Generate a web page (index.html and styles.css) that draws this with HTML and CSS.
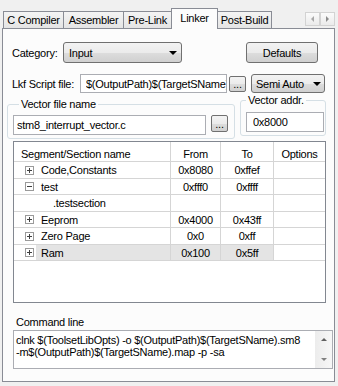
FILE: index.html
```html
<!DOCTYPE html>
<html lang="en">
<head>
  <meta charset="UTF-8" />
  <title>Linker Settings</title>
  <link rel="stylesheet" href="styles.css">
</head>
<body>

  <div class="abas">
    <div class="aba aba-cc">C Compiler</div>
    <div class="aba aba-asm">Assembler</div>
    <div class="aba aba-pre">Pre-Link</div>
    <div class="aba aba-ativa">Linker</div>
    <div class="aba aba-pos">Post-Build</div>
    <div class="aba-setas">
      <span class="seta seta-esq"></span>
      <span class="seta seta-dir"></span>
    </div>
  </div>

  <div class="painel">
    <div class="linha linha-cat">
      <label class="rotulo rotulo-cat">Category:</label>
      <div class="combo combo-cat">Input</div>
      <button class="botao btn-padrao">Defaults</button>
    </div>

    <div class="linha linha-lkf">
      <label class="rotulo rotulo-lkf">Lkf Script file:</label>
      <input type="text" class="campo campo-lkf" value="$(OutputPath)$(TargetSName).lkf" readonly>
      <button class="botao btn-pontos">...</button>
      <div class="combo combo-modo">Semi Auto</div>
    </div>

    <div class="linha-grupos">
      <fieldset class="grupo grupo-arquivo">
        <legend>Vector file name</legend>
        <input type="text" class="campo campo-vetor" value="stm8_interrupt_vector.c" readonly>
        <button class="botao btn-pontos btn-vetor">...</button>
      </fieldset>
      <fieldset class="grupo grupo-endereco">
        <legend>Vector addr.</legend>
        <input type="text" class="campo campo-endereco" value="0x8000" readonly>
      </fieldset>
    </div>

    <div class="tabela">
      <div class="grade">
        <div class="cab nome">Segment/Section name</div>
        <div class="cab">From</div>
        <div class="cab">To</div>
        <div class="cab ultima">Options</div>

        <div class="cel nome">
          <svg width="9" height="9"><rect x=".5" y=".5" width="8" height="8" fill="#fff" stroke="#9a9a9a"/><path d="M2 4.5h5M4.5 2v5" stroke="#404040"/></svg>
          <span class="texto">Code,Constants</span>
        </div>
        <div class="cel">0x8080</div>
        <div class="cel">0xffef</div>
        <div class="cel ultima"></div>

        <div class="cel nome">
          <svg width="9" height="9"><rect x=".5" y=".5" width="8" height="8" fill="#fff" stroke="#9a9a9a"/><path d="M2 4.5h5" stroke="#404040"/></svg>
          <span class="texto">test</span>
        </div>
        <div class="cel">0xfff0</div>
        <div class="cel">0xffff</div>
        <div class="cel ultima"></div>

        <div class="cel nome sub"><span class="texto">.testsection</span></div>
        <div class="cel"></div>
        <div class="cel"></div>
        <div class="cel ultima"></div>

        <div class="cel nome">
          <svg width="9" height="9"><rect x=".5" y=".5" width="8" height="8" fill="#fff" stroke="#9a9a9a"/><path d="M2 4.5h5M4.5 2v5" stroke="#404040"/></svg>
          <span class="texto">Eeprom</span>
        </div>
        <div class="cel">0x4000</div>
        <div class="cel">0x43ff</div>
        <div class="cel ultima"></div>

        <div class="cel nome">
          <svg width="9" height="9"><rect x=".5" y=".5" width="8" height="8" fill="#fff" stroke="#9a9a9a"/><path d="M2 4.5h5M4.5 2v5" stroke="#404040"/></svg>
          <span class="texto">Zero Page</span>
        </div>
        <div class="cel">0x0</div>
        <div class="cel">0xff</div>
        <div class="cel ultima"></div>

        <div class="cel nome selecionada">
          <svg width="9" height="9"><rect x=".5" y=".5" width="8" height="8" fill="#fff" stroke="#9a9a9a"/><path d="M2 4.5h5M4.5 2v5" stroke="#404040"/></svg>
          <span class="texto">Ram</span>
        </div>
        <div class="cel selecionada">0x100</div>
        <div class="cel selecionada">0x5ff</div>
        <div class="cel ultima"></div>
      </div>
    </div>

    <div class="rotulo-cmd">Command line</div>
    <div class="cmd">
      <div class="cmd-texto">
        clnk $(ToolsetLibOpts) -o $(OutputPath)$(TargetSName).sm8<br>
        -m$(OutputPath)$(TargetSName).map -p -sa
      </div>
      <div class="rolagem">
        <span class="rol-cima"></span>
        <span class="rol-baixo"></span>
      </div>
    </div>
  </div>

</body>
</html>
```

FILE: styles.css
```css
body {
  margin: 0;
  width: 338px;
  height: 386px;
  overflow: hidden;
  background: #f0f0f0;
  font-family: "Liberation Sans", Arial, sans-serif;
  font-size: 11px;
  letter-spacing: -0.25px;
  color: #000;
}

/* tabs */
.abas {
  display: flex;
  align-items: flex-end;
  height: 28px;
  padding-left: 3px;
}
.aba {
  box-sizing: border-box;
  height: 17px;
  line-height: 16px;
  text-align: center;
  border: 1px solid #898c95;
  border-bottom: none;
  background: linear-gradient(#f4f4f4, #e4e4e4);
  margin-left: -1px;
}
.aba-cc {
  width: 61px;
  margin-left: 0;
}
.aba-asm {
  width: 61px;
}
.aba-pre {
  width: 49px;
}
.aba-pos {
  width: 55px;
}
.aba-ativa {
  position: relative;
  z-index: 1;
  width: 47px;
  height: 21px;
  line-height: 18px;
  margin-bottom: -1px;
  background: #fcfcfc;
}
.aba-setas {
  display: flex;
  align-self: flex-start;
  margin-top: 12px;
  margin-left: auto;
  margin-right: 3px;
}
.seta {
  box-sizing: border-box;
  width: 15px;
  height: 14px;
  border: 1px solid #d3d3d3;
  background: linear-gradient(#fbfbfb, #ebebeb);
  display: flex;
  align-items: center;
  justify-content: center;
}
.seta-esq::before {
  content: "";
  border-top: 3px solid transparent;
  border-bottom: 3px solid transparent;
  border-right: 3px solid #a8a8a8;
}
.seta-dir::before {
  content: "";
  border-top: 3px solid transparent;
  border-bottom: 3px solid transparent;
  border-left: 3px solid #8c8c8c;
}

/* panel */
.painel {
  box-sizing: border-box;
  width: 333px;
  height: 354px;
  margin-left: 2px;
  border: 1px solid #898c95;
  background: #fcfcfc;
}
.linha {
  display: flex;
  align-items: center;
}
.linha-cat {
  margin-top: 13px;
  height: 21px;
}
.linha-lkf {
  margin-top: 11px;
  height: 19px;
}
.rotulo {
  box-sizing: border-box;
  padding-left: 9px;
}
.rotulo-cat {
  width: 60px;
}
.rotulo-lkf {
  width: 77px;
}

.combo {
  box-sizing: border-box;
  display: flex;
  align-items: center;
  justify-content: space-between;
  border: 1px solid #707070;
  border-radius: 3px;
  background: linear-gradient(#f3f3f3 0%, #ebebeb 50%, #dddddd 51%, #d0d0d0 100%);
  padding: 0 4px 0 5px;
}
.combo::after {
  content: "";
  border-left: 4px solid transparent;
  border-right: 4px solid transparent;
  border-top: 4px solid #000;
}
.combo-cat {
  width: 119px;
  height: 21px;
}
.combo-modo {
  width: 74px;
  height: 19px;
  margin-left: 5px;
  padding-left: 4px;
  padding-right: 3px;
}

.botao {
  box-sizing: border-box;
  margin: 0;
  padding: 0;
  border: 1px solid #707070;
  border-radius: 3px;
  background: linear-gradient(#f3f3f3 0%, #ebebeb 50%, #dddddd 51%, #d0d0d0 100%);
  font-family: inherit;
  font-size: 11px;
  letter-spacing: inherit;
  color: #000;
}
.btn-padrao {
  width: 72px;
  height: 21px;
  margin-left: 64px;
}
.btn-pontos {
  width: 17px;
  height: 16px;
  margin-left: 2px;
  border-radius: 2px;
  line-height: 12px;
}

.campo {
  box-sizing: border-box;
  margin: 0;
  border: 1px solid #abadb3;
  background: #fff;
  font-family: inherit;
  font-size: 11px;
  letter-spacing: inherit;
  color: #000;
  outline: none;
}
.campo-lkf {
  width: 147px;
  height: 19px;
  padding: 0 0 0 5px;
}

/* group boxes */
.linha-grupos {
  display: flex;
  align-items: flex-start;
  margin-left: 4px;
}
.grupo {
  box-sizing: border-box;
  margin: 0;
  border: 1px solid #d5dfe5;
  border-radius: 3px;
  min-inline-size: auto;
}
.grupo legend {
  padding: 0 2px;
  line-height: 12px;
}
.grupo-arquivo {
  display: flex;
  align-items: flex-start;
  width: 228px;
  margin-top: 5px;
  padding: 5px 0 3px 5px;
}
.grupo-arquivo legend {
  margin-left: 6px;
}
.campo-vetor {
  width: 193px;
  height: 20px;
  padding: 0 0 0 3px;
}
.btn-vetor {
  height: 17px;
  margin-left: 5px;
}
.grupo-endereco {
  width: 86px;
  margin-top: 1px;
  margin-left: 5px;
  padding: 6px 1px 3px 5px;
}
.campo-endereco {
  width: 78px;
  height: 20px;
  padding: 0 0 0 6px;
}

/* segment table */
.tabela {
  box-sizing: border-box;
  width: 313px;
  height: 162px;
  margin: 2px 0 0 10px;
  border: 1px solid #828790;
  background: #fff;
}
.grade {
  display: grid;
  grid-template-columns: 157px 50px 53px 51px;
  grid-template-rows: 20px 17px 16px 17px 16px 17px 16px;
}
.cab, .cel {
  box-sizing: border-box;
  display: flex;
  align-items: center;
  justify-content: center;
  border-right: 1px solid #d5d5d5;
  border-bottom: 1px solid #d5d5d5;
  white-space: nowrap;
}
.cab {
  align-items: flex-end;
  line-height: 13px;
}
.cab.nome {
  justify-content: flex-start;
  padding-left: 7px;
}
.ultima {
  border-right: none;
}
.cel.nome {
  justify-content: flex-start;
  align-items: stretch;
  padding-left: 11px;
}
.cel.nome svg {
  align-self: center;
  flex: none;
}
.texto {
  display: flex;
  align-items: center;
  flex: 1;
  margin-left: 2px;
  padding-left: 5px;
}
.cel.sub {
  padding-left: 39px;
}
.sub .texto {
  margin-left: 0;
  padding-left: 0;
}
.cel.selecionada {
  background: #e4e4e4;
}
.cel.nome.selecionada {
  background: #fff;
}
.nome.selecionada .texto {
  background: #e4e4e4;
}

/* command line */
.rotulo-cmd {
  margin: 13px 0 0 13px;
  line-height: 13px;
}
.cmd {
  box-sizing: border-box;
  display: flex;
  width: 320px;
  height: 39px;
  margin: 1px 0 0 10px;
  border: 1px solid #abadb3;
  background: #fff;
}
.cmd-texto {
  flex: 1;
  padding: 3px 0 0 2px;
  line-height: 12px;
  white-space: nowrap;
  overflow: hidden;
}
.rolagem {
  width: 17px;
  display: flex;
  flex-direction: column;
  justify-content: space-between;
  background: linear-gradient(90deg, #ececec, #f7f7f7);
}
.rolagem span {
  height: 17px;
  display: flex;
  align-items: center;
  justify-content: center;
}
.rol-cima::before {
  content: "";
  border-left: 3px solid transparent;
  border-right: 3px solid transparent;
  border-bottom: 3px solid #606060;
}
.rol-baixo::before {
  content: "";
  border-left: 3px solid transparent;
  border-right: 3px solid transparent;
  border-top: 3px solid #808080;
}
```
